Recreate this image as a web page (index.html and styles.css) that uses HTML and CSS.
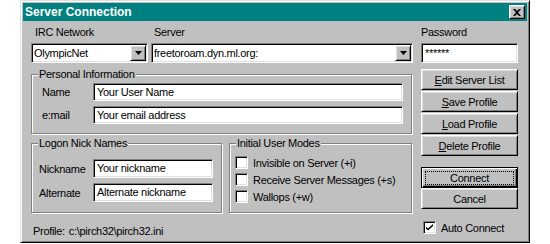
FILE: index.html
```html
<!DOCTYPE html>
<html lang="en">
<head>
    <meta charset="UTF-8">
    <title>Server Connection</title>
    <link rel="stylesheet" href="styles.css">
</head>
<body>
    <div class="window">
        <div class="titlebar">
            <span class="title">Server Connection</span>
            <button class="close raised">
                <svg width="8" height="7" viewBox="0 0 8 7"><path d="M0 0h2l2 2 2-2h2L5 3.5 8 7H6L4 5 2 7H0l3-3.5z" fill="#000"/></svg>
            </button>
        </div>

        <div class="content">
            <div class="main">
                <!-- network / server -->
                <div class="top-row">
                    <div class="network">
                        <div class="label">IRC Network</div>
                        <div class="combo sunken">
                            <span class="combo-text">OlympicNet</span>
                            <span class="drop raised"><svg width="7" height="4" viewBox="0 0 7 4"><path d="M0 0h7L3.5 4z" fill="#000"/></svg></span>
                        </div>
                    </div>
                    <div class="server">
                        <div class="label">Server</div>
                        <div class="combo sunken">
                            <span class="combo-text">freetoroam.dyn.ml.org:</span>
                            <span class="drop raised"><svg width="7" height="4" viewBox="0 0 7 4"><path d="M0 0h7L3.5 4z" fill="#000"/></svg></span>
                        </div>
                    </div>
                </div>

                <div class="group personal">
                    <span class="caption">Personal Information</span>
                    <div class="row">
                        <span class="row-label">Name</span>
                        <div class="input sunken">Your User Name</div>
                    </div>
                    <div class="row">
                        <span class="row-label">e:mail</span>
                        <div class="input sunken">Your email address</div>
                    </div>
                </div>

                <div class="groups">
                    <div class="group nicks">
                        <span class="caption">Logon Nick Names</span>
                        <div class="row">
                            <span class="row-label">Nickname</span>
                            <div class="input sunken">Your nickname</div>
                        </div>
                        <div class="row">
                            <span class="row-label">Alternate</span>
                            <div class="input sunken">Alternate nickname</div>
                        </div>
                    </div>
                    <div class="group modes">
                        <span class="caption">Initial User Modes</span>
                        <div class="check"><span class="box sunken"></span>Invisible on Server (+i)</div>
                        <div class="check"><span class="box sunken"></span>Receive Server Messages (+s)</div>
                        <div class="check"><span class="box sunken"></span>Wallops (+w)</div>
                    </div>
                </div>

                <div class="profile"><span>Profile:</span><span>c:\pirch32\pirch32.ini</span></div>
            </div>

            <div class="side">
                <div class="label password-label">Password</div>
                <div class="password sunken">******</div>

                <div class="buttons">
                    <button class="button raised"><u>E</u>dit Server List</button>
                    <button class="button raised"><u>S</u>ave Profile</button>
                    <button class="button raised"><u>L</u>oad Profile</button>
                    <button class="button raised"><u>D</u>elete Profile</button>
                </div>

                <div class="buttons actions">
                    <button class="button default"><span class="focus">Connect</span></button>
                    <button class="button raised">Cancel</button>
                </div>

                <div class="check auto">
                    <span class="box sunken">
                        <svg width="9" height="9" viewBox="0 0 9 9"><path d="M1 3.5l2 2 5-4.5v2L3 7.5l-2-2z" fill="#000"/></svg>
                    </span>Auto Connect
                </div>
            </div>
        </div>
    </div>
</body>
</html>
```

FILE: styles.css
```css
* {
    box-sizing: border-box;
}
body {
    margin: 0;
    background-color: #fff;
    font-family: "Liberation Sans", Arial, sans-serif;
    font-size: 11px;
    letter-spacing: -0.3px;
    color: #000;
}
.window {
    width: 510px;
    height: 243px;
    margin-left: 20px;
    padding: 2px;
    background-color: #c0c0c0;
    border: 1px solid;
    border-color: #dfdfdf #000 #000 #dfdfdf;
    box-shadow: inset 1px 1px #fff, inset -1px -1px #808080;
}
/* 3d borders */
.raised {
    background-color: #c0c0c0;
    border: 1px solid;
    border-color: #fff #000 #000 #fff;
    box-shadow: inset 1px 1px #dfdfdf, inset -1px -1px #808080;
}
.sunken {
    background-color: #fff;
    border: 1px solid;
    border-color: #808080 #fff #fff #808080;
    box-shadow: inset 1px 1px #000, inset -1px -1px #dfdfdf;
}
.titlebar {
    height: 18px;
    background-color: #008080;
    color: #fff;
    display: flex;
    align-items: center;
    justify-content: space-between;
    padding: 0 2px;
}
.title {
    font-size: 12px;
    font-weight: bold;
    letter-spacing: 0;
    line-height: 18px;
}
.close {
    width: 16px;
    height: 14px;
    padding: 0;
    display: flex;
    align-items: center;
    justify-content: center;
}
.content {
    display: flex;
    gap: 8px;
    padding: 5px 0 0 8px;
}
.main {
    width: 382px;
}
.side {
    width: 97px;
}
.label {
    height: 13px;
    line-height: 13px;
    margin-bottom: 4px;
}
.top-row {
    display: flex;
    gap: 3px;
}
.network {
    width: 117px;
}
.network .label {
    padding-left: 4px;
}
.server {
    width: 262px;
}
.server .label {
    padding-left: 3px;
}
.combo {
    height: 20px;
    padding: 1px;
    display: flex;
    align-items: center;
}
.combo-text {
    flex: 1;
    padding-left: 1px;
    line-height: 16px;
}
.drop {
    width: 16px;
    height: 16px;
    display: flex;
    align-items: center;
    justify-content: center;
}
/* group boxes */
.group {
    position: relative;
    border: 1px solid #808080;
    box-shadow: inset 1px 1px #fff, 1px 1px #fff;
}
.caption {
    position: absolute;
    top: -7px;
    left: 6px;
    padding: 0 1px;
    line-height: 13px;
    background-color: #c0c0c0;
}
.row {
    display: flex;
    align-items: center;
}
.input {
    flex: 1;
    padding: 0 3px;
    white-space: nowrap;
}
.personal {
    width: 381px;
    margin-top: 11px;
    padding: 8px 8px 9px 10px;
    display: flex;
    flex-direction: column;
    gap: 5px;
}
.personal .row-label {
    width: 51px;
}
.personal .input {
    height: 18px;
    line-height: 16px;
}
.groups {
    display: flex;
    gap: 7px;
    margin-top: 9px;
}
.nicks {
    width: 191px;
    padding: 15px 8px 10px 7px;
    display: flex;
    flex-direction: column;
    gap: 5px;
}
.nicks .row-label {
    width: 54px;
}
.nicks .input {
    height: 19px;
    line-height: 17px;
}
.modes {
    width: 183px;
    padding: 10px 0 0 5px;
}
.check {
    display: flex;
    align-items: center;
    height: 17px;
    white-space: nowrap;
}
.box {
    width: 13px;
    height: 13px;
    margin-right: 5px;
    display: flex;
    align-items: center;
    justify-content: center;
}
.profile {
    display: flex;
    gap: 4px;
    margin-top: 12px;
    padding-left: 2px;
    line-height: 13px;
}
/* right column */
.password {
    height: 20px;
    padding: 0 3px;
    line-height: 18px;
}
.buttons {
    display: flex;
    flex-direction: column;
    gap: 1px;
    margin-top: 6px;
}
.button {
    height: 21px;
    padding: 0;
    font-family: inherit;
    font-size: inherit;
    letter-spacing: inherit;
    color: #000;
}
.actions {
    gap: 0;
    margin-top: 11px;
}
.default {
    display: flex;
    background-color: #c0c0c0;
    border: 1px solid #000;
    box-shadow: inset 1px 1px #fff, inset -1px -1px #000, inset -2px -2px #808080;
}
.focus {
    flex: 1;
    margin: 3px 3px 2px 3px;
    border: 1px dotted #000;
    display: flex;
    align-items: center;
    justify-content: center;
}
.auto {
    margin-top: 11px;
    padding-left: 2px;
    height: 15px;
}
```
